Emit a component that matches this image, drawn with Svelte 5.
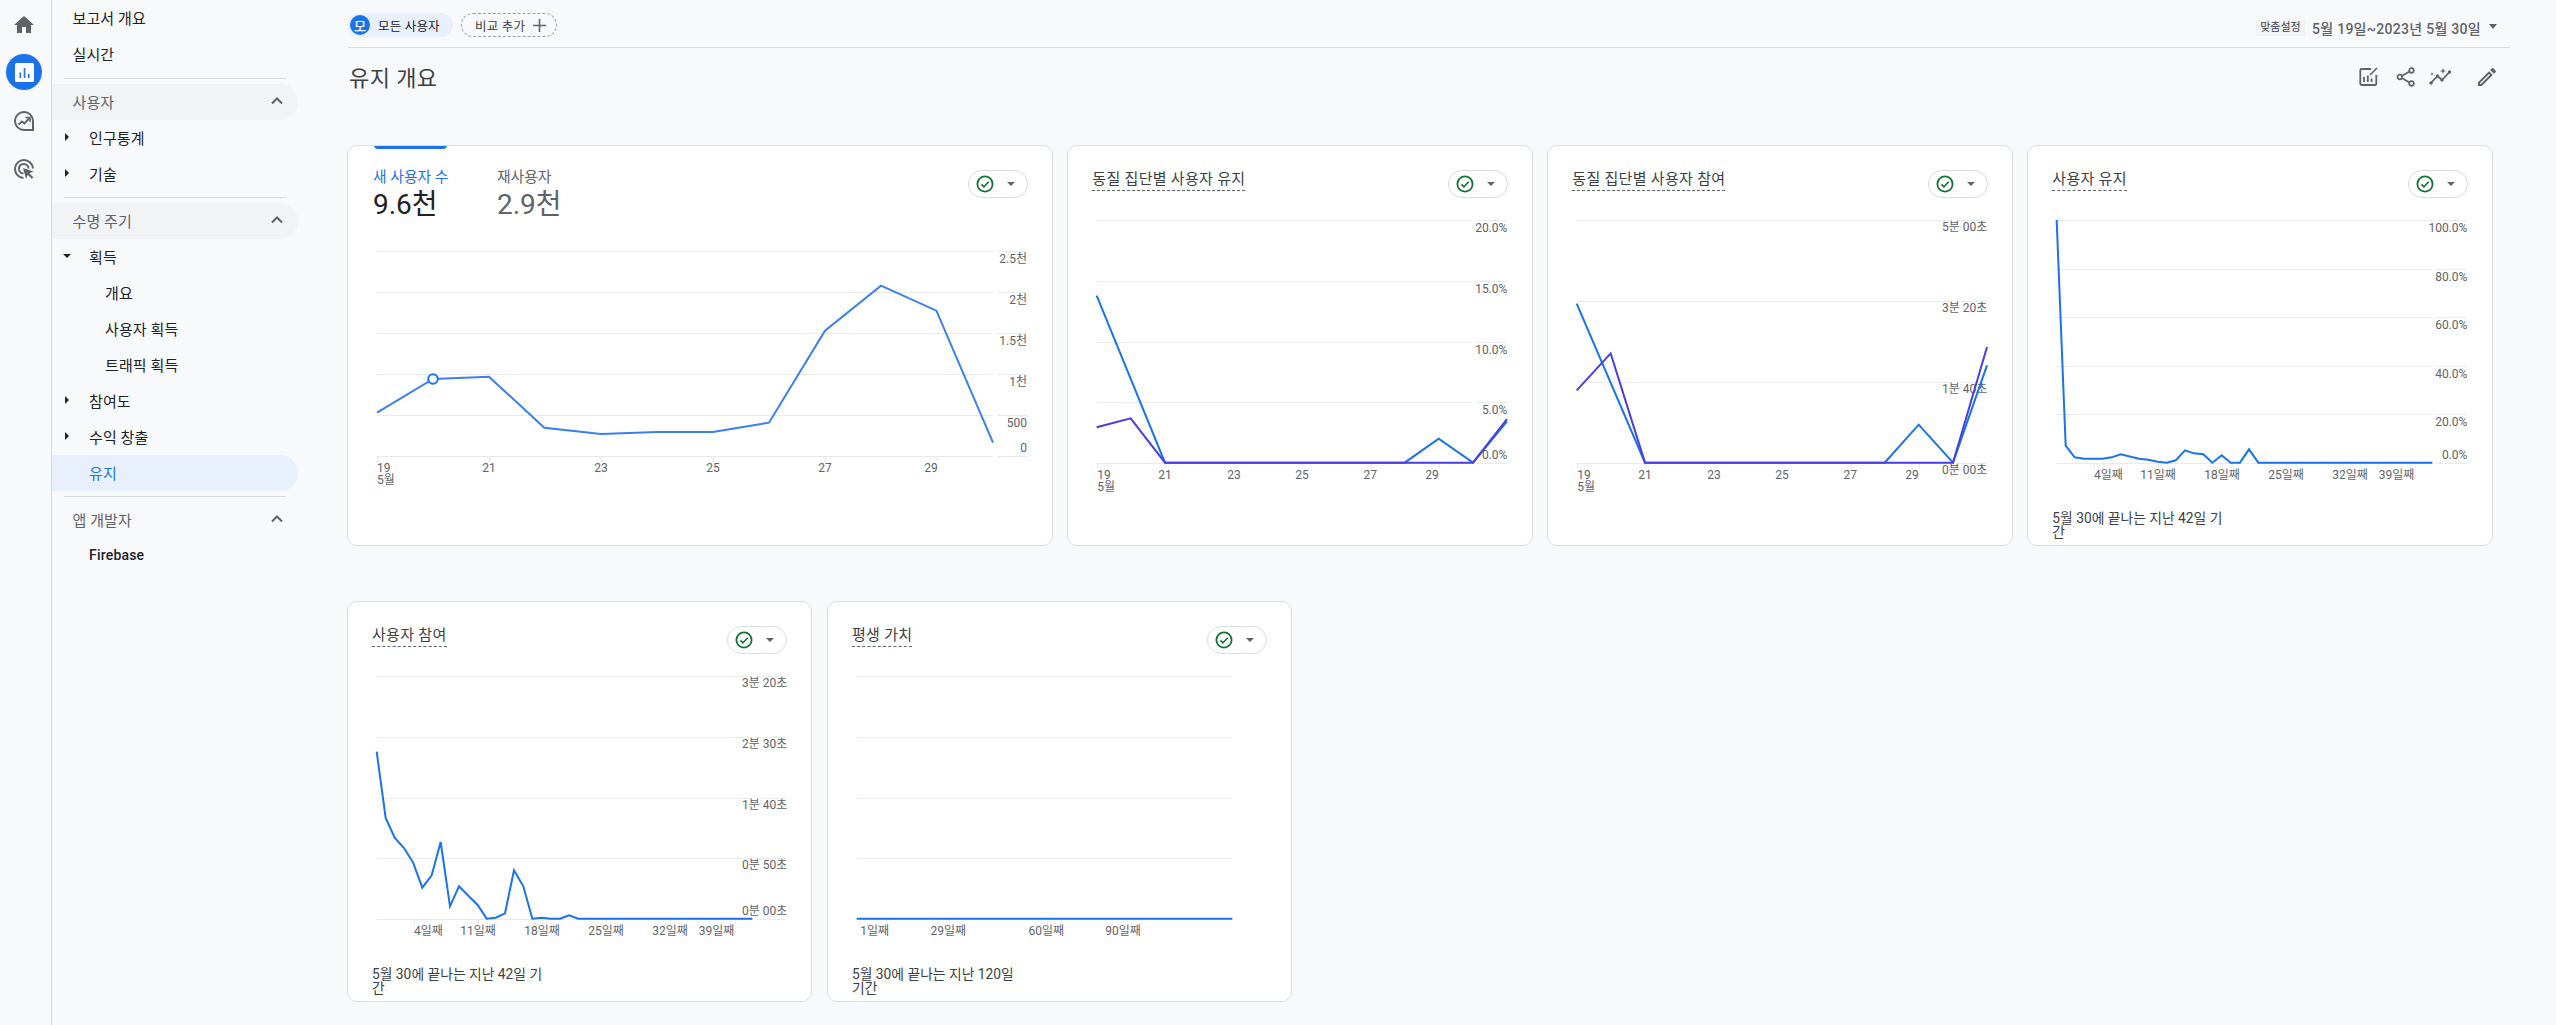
<script>
  const Z1 = 16, Z2 = 4;
  const conv = (pts, top) => pts.map(([x, y]) => `${((x - 22) / 3).toFixed(2)},${((y - top) / 3).toFixed(2)}`).join(' ');
  const BLUE = '#1a73e8', PURPLE = '#4a3de2';
  const xs7 = [
    { x: 30.3, t: '19', a: 'start', sub: '5월' }, { x: 98, t: '21' }, { x: 167, t: '23' },
    { x: 235, t: '25' }, { x: 303.3, t: '27' }, { x: 365, t: '29' }
  ];
  const ticks7 = [30.3, 98, 167, 235, 303.7, 372];
  const days = [
    { x: 67, t: '4일째', a: 'start' }, { x: 131, t: '11일째' }, { x: 195, t: '18일째' },
    { x: 259, t: '25일째' }, { x: 323, t: '32일째' }, { x: 387.3, t: '39일째', a: 'end' }
  ];
  const dayTicks = [67, 131, 195, 259, 323, 388];

  const row1 = [
    {
      title: '동질 집단별 사용자 유지', grid: [75, 136, 197, 257, 318], right: true,
      labels: [['20.0%', 82.3], ['15.0%', 143.3], ['10.0%', 204.3], ['5.0%', 264.3], ['0.0%', 309.3]],
      xl: xs7, ticks: ticks7,
      lines: [
        { c: BLUE, p: conv([[111, 468], [316, 969], [1035, 969], [1137, 897], [1240, 969], [1342, 845]], Z1) },
        { c: PURPLE, p: conv([[111, 863], [213, 836], [316, 969], [1240, 969], [1342, 838]], Z1) }
      ]
    },
    {
      title: '동질 집단별 사용자 참여', grid: [75, 156, 237, 318], right: true,
      labels: [['5분 00초', 82], ['3분 20초', 163], ['1분 40초', 244], ['0분 00초', 325]],
      xl: xs7, ticks: ticks7,
      lines: [
        { c: BLUE, p: conv([[111, 492], [316, 969], [1035, 969], [1137, 855], [1240, 969], [1342, 677]], Z1) },
        { c: PURPLE, p: conv([[111, 752], [213, 641], [316, 969], [1240, 969], [1342, 622]], Z1) }
      ]
    },
    {
      title: '사용자 유지', grid: [75, 124, 172, 221, 269, 318], right: true,
      labels: [['100.0%', 82.3], ['80.0%', 131.3], ['60.0%', 179.3], ['40.0%', 228.3], ['20.0%', 276.3], ['0.0%', 309.3]],
      xl: days, ticks: dayTicks,
      lines: [{ c: BLUE, p: conv([[111, 241], [138, 918], [165, 953], [193, 957], [248, 957], [276, 953], [303, 944], [358, 957], [386, 960], [414, 966], [441, 969], [468, 962], [496, 932], [523, 941], [551, 944], [578, 969], [606, 947], [633, 969], [661, 969], [688, 929], [716, 969], [1238, 969]], Z1) }],
      foot: ['5월 30에 끝나는 지난 42일 기', '간']
    }
  ];
  const row2 = [
    {
      title: '사용자 참여', grid: [75, 136, 197, 257, 318], right: true,
      labels: [['3분 20초', 82], ['2분 30초', 143], ['1분 40초', 204], ['0분 50초', 264], ['0분 00초', 309.3]],
      xl: days, ticks: dayTicks,
      lines: [{ c: BLUE, p: conv([[111, 456], [138, 655], [165, 714], [193, 745], [220, 788], [248, 864], [276, 827], [303, 727], [331, 920], [358, 860], [386, 888], [414, 916], [441, 957], [468, 954], [496, 941], [523, 812], [551, 860], [578, 957], [606, 954], [633, 957], [661, 957], [688, 947], [716, 957], [1238, 957]], Z2) }],
      foot: ['5월 30에 끝나는 지난 42일 기', '간']
    },
    {
      title: '평생 가치', grid: [75, 136, 197, 257, 318], right: false, labels: [],
      xl: [{ x: 33.3, t: '1일째', a: 'start' }, { x: 121.3, t: '29일째' }, { x: 219.3, t: '60일째' }, { x: 313.7, t: '90일째', a: 'end' }],
      ticks: [33.3, 122, 220, 313.7],
      lines: [{ c: BLUE, p: conv([[111, 957], [1238, 957]], Z2) }],
      foot: ['5월 30에 끝나는 지난 120일', '기간']
    }
  ];

  const wideGrid = [106, 147, 188, 229, 270, 311];
  const wideLabels = [['2.5천', 114], ['2천', 155], ['1.5천', 196], ['1천', 237], ['500', 278], ['0', 302.5]];
  const wideX = [
    { x: 30, t: '19', a: 'start', sub: '5월' }, { x: 142, t: '21' }, { x: 254, t: '23' },
    { x: 366, t: '25' }, { x: 478, t: '27' }, { x: 584, t: '29' }
  ];
  const wideTicks = [30, 142, 254, 366, 478, 590];
  const widePts = [[30, 267.7], [86, 234], [142, 231.7], [197.3, 282.7], [254, 289], [310, 287], [366, 287], [422, 277.7], [478, 185.7], [534, 140.7], [589.4, 165.7], [646, 297.7]]
    .map((p) => p.join(',')).join(' ');
</script>

{#snippet pill()}
  <div class="pill">
    <svg width="18" height="18" viewBox="0 0 18 18"><circle cx="9" cy="9" r="7.6" fill="none" stroke="#137333" stroke-width="1.8"/><path d="M5.4 9.4l2.5 2.4 4.8-5" fill="none" stroke="#137333" stroke-width="1.6"/></svg>
    <i class="tri-down"></i>
  </div>
{/snippet}

{#snippet xaxis(c, base)}
  {#each c.ticks as t}
    <line class="gl" x1={t + 0.5} x2={t + 0.5} y1={base} y2={base + 6} />
  {/each}
  {#each c.xl as l}
    <text class="tk" x={l.x} y={base + 16} text-anchor={l.a || 'middle'}>{l.t}</text>
    {#if l.sub}<text class="tk" x={l.x} y={base + 28} text-anchor="start">{l.sub}</text>{/if}
  {/each}
{/snippet}

{#snippet card(c)}
  <section class="card">
    <header class="chead">
      <span class="ctitle">{c.title}</span>
      {@render pill()}
    </header>
    <svg class="chart" width="463.33" height="300" viewBox="1 60 463.33 300">
      {#each c.grid as g}
        <line class="gl" x1="29.7" x2="405.3" y1={g + 0.5} y2={g + 0.5} />
        {#if c.right}<line class="gl" x1="409.3" x2="439.3" y1={g + 0.5} y2={g + 0.5} />{/if}
      {/each}
      {#each c.labels as l}
        <text class="tk" x="440.3" y={l[1] + 4.3} text-anchor="end">{l[0]}</text>
      {/each}
      {@render xaxis(c, 318)}
      {#each c.lines as ln}
        <polyline points={ln.p} fill="none" stroke={ln.c} stroke-width="2" />
      {/each}
    </svg>
    {#if c.foot}
      <p class="foot">{c.foot[0]}<br />{c.foot[1]}</p>
    {/if}
  </section>
{/snippet}

<div class="page">
  <nav class="rail">
    <svg class="ri home" width="24" height="24" viewBox="0 0 24 24"><path d="M10 20v-6h4v6h5v-8h3L12 3 2 12h3v8z" fill="#5f6368"/></svg>
    <div class="ri active">
      <svg width="19" height="19" viewBox="0 0 19 19"><rect width="19" height="19" rx="1.5" fill="#fff"/><path d="M4.5 9.5h1.6V15H4.5zM8.7 5h1.6v10H8.7zM12.9 11h1.6v4h-1.6z" fill="#1a73e8"/></svg>
    </div>
    <svg class="ri explore" width="24" height="24" viewBox="0 0 24 24" fill="none" stroke="#5f6368" stroke-width="2"><path d="M21 21h-9a9 9 0 1 1 9-9z"/><path d="M6.5 15.500l3.500-3 2.500 2 4.500-5" stroke-width="2"/><path d="M13.500 8.500H18V13" stroke-width="1.600"/></svg>
    <svg class="ri" width="24" height="24" viewBox="0 0 24 24" fill="none" stroke="#5f6368" stroke-width="2"><path d="M21 11.500a9 9 0 1 0-9.500 9.500"/><path d="M16.500 11.500a4.800 4.800 0 1 0-5 5"/><path d="M11 11l10.500 3.600-4.200 1.600 4 4-1.600 1.600-4-4-1.600 4.200z" fill="#5f6368" stroke="none"/></svg>
  </nav>

  <aside class="side">
    <div class="it top">보고서 개요</div>
    <div class="it top">실시간</div>
    <hr class="first" />
    <div class="sec bg"><span>사용자</span><svg width="12" height="8" viewBox="0 0 12 8"><path d="M1 6.500l5-5 5 5" fill="none" stroke="#5f6368" stroke-width="2"/></svg></div>
    <div class="it l1"><i class="tri-right"></i><span>인구통계</span></div>
    <div class="it l1"><i class="tri-right"></i><span>기술</span></div>
    <hr />
    <div class="sec bg"><span>수명 주기</span><svg width="12" height="8" viewBox="0 0 12 8"><path d="M1 6.500l5-5 5 5" fill="none" stroke="#5f6368" stroke-width="2"/></svg></div>
    <div class="it l1"><i class="tri-open"></i><span>획득</span></div>
    <div class="it l2">개요</div>
    <div class="it l2">사용자 획득</div>
    <div class="it l2">트래픽 획득</div>
    <div class="it l1"><i class="tri-right"></i><span>참여도</span></div>
    <div class="it l1"><i class="tri-right"></i><span>수익 창출</span></div>
    <div class="it l1 on"><i class="tri-none"></i><span>유지</span></div>
    <hr />
    <div class="sec"><span>앱 개발자</span><svg width="12" height="8" viewBox="0 0 12 8"><path d="M1 6.500l5-5 5 5" fill="none" stroke="#5f6368" stroke-width="2"/></svg></div>
    <div class="it l1"><i class="tri-none"></i><span class="fb">Firebase</span></div>
  </aside>

  <main class="main">
    <div class="topbar">
      <div class="chip seg"><b>모</b><span>모든 사용자</span></div>
      <div class="chip add"><span>비교 추가</span><svg width="13" height="13" viewBox="0 0 13 13"><path d="M6.500 0v13M0 6.500h13" stroke="#5f6368" stroke-width="1.600"/></svg></div>
      <div class="date">
        <span class="custom">맞춤설정</span>
        <span class="range">5월 19일~2023년 5월 30일</span>
        <i class="tri-date"></i>
      </div>
    </div>

    <div class="titlebar">
      <h1>유지 개요</h1>
      <div class="tools">
        <svg class="t1" width="20" height="20" viewBox="0 0 20 20" fill="none" stroke="#5f6368" stroke-width="1.800"><path d="M12 2H2.500A1.200 1.200 0 0 0 1.300 3.200v13.600A1.200 1.200 0 0 0 2.500 18h13.600a1.200 1.200 0 0 0 1.200-1.200V8"/><path d="M11 8l7-7" stroke-width="1.600"/><path d="M5 10v5M8.800 8.500V15M12.600 11.500V15" stroke-width="1.800"/></svg>
        <svg class="t2" width="20" height="20" viewBox="0 0 20 20" fill="none" stroke="#5f6368" stroke-width="1.700"><circle cx="15.500" cy="3.500" r="2.300"/><circle cx="3.800" cy="10" r="2.300"/><circle cx="15.500" cy="16.500" r="2.300"/><path d="M13.500 4.600L5.800 8.900M5.800 11.100l7.700 4.300"/></svg>
        <svg class="t3" width="24" height="20" viewBox="0 0 24 20" fill="#5f6368"><path d="M2 16l6.500-7 4.500 4 7.500-8" fill="none" stroke="#5f6368" stroke-width="1.800"/><circle cx="2" cy="16" r="1.700"/><circle cx="8.500" cy="9" r="1.700"/><circle cx="13" cy="13" r="1.700"/><circle cx="20.500" cy="5" r="1.700"/><path d="M14 1l.8 2.200L17 4l-2.200.8L14 7l-.8-2.200L11 4l2.200-.8zM3 5l.5 1.500L5 7l-1.500.5L3 9l-.5-1.500L1 7l1.500-.5z"/></svg>
        <svg class="t4" width="20" height="20" viewBox="2 2 20 20"><path fill="#5f6368" d="M14.060 9.020l.92.92L5.920 19H5v-.92l9.060-9.060M17.660 3c-.25 0-.51.1-.7.29l-1.830 1.830 3.750 3.750 1.830-1.830c.39-.39.39-1.020 0-1.410l-2.340-2.340c-.2-.2-.45-.29-.71-.29zm-3.600 3.190L3 17.250V21h3.750L17.810 9.940l-3.750-3.750z"/></svg>
      </div>
    </div>

    <div class="row">
      <section class="card wide">
        <i class="tabbar"></i>
        <header class="chead tall">
          <div class="tabs">
            <div class="tab sel"><span>새 사용자 수</span><strong>9.6천</strong></div>
            <div class="tab"><span>재사용자</span><strong>2.9천</strong></div>
          </div>
          {@render pill()}
        </header>
        <svg class="chart" width="703.67" height="264" viewBox="1 96 703.67 264">
          {#each wideGrid as g}
            <line class="gl" x1="30" x2="646" y1={g + 0.5} y2={g + 0.5} />
            <line class="gl" x1="650.500" x2="680" y1={g + 0.5} y2={g + 0.5} />
          {/each}
          {#each wideLabels as l}
            <text class="tk" x="680" y={l[1] + 4.3} text-anchor="end">{l[0]}</text>
          {/each}
          {@render xaxis({ ticks: wideTicks, xl: wideX }, 311)}
          <polyline points={widePts} fill="none" stroke="#3a7ff0" stroke-width="2" />
          <circle cx="86" cy="234" r="4.800" fill="#fff" stroke="#1a73e8" stroke-width="2" />
        </svg>
      </section>
      {#each row1 as c}{@render card(c)}{/each}
    </div>

    <div class="row two">
      {#each row2 as c}{@render card(c)}{/each}
    </div>
  </main>
</div>

<style>
  :global(body) {
    margin: 0;
    background: #f8f9fb;
  }
  .page {
    display: flex;
    height: 1025px;
    overflow: hidden;
    background: #f8f9fb;
    color: #202124;
    font-family: Roboto, "Noto Sans CJK KR", sans-serif;
    font-size: 14px;
  }
  .rail {
    box-sizing: border-box;
    width: 52px;
    flex: none;
    border-right: 1px solid #d5d7db;
    display: flex;
    flex-direction: column;
    align-items: center;
    padding: 13px 3px 0 0;
  }
  .ri {
    display: block;
    margin-bottom: 24px;
  }
  .ri.home {
    margin-bottom: 17px;
  }
  .ri.active {
    width: 36px;
    height: 36px;
    flex: none;
    border-radius: 50%;
    background: #1a73e8;
    display: flex;
    align-items: center;
    justify-content: center;
    margin-bottom: 19px;
  }
  .side {
    width: 246px;
    flex: none;
    font-size: 15px;
    letter-spacing: 0.1px;
  }
  .side hr {
    margin: 5px 12px;
    border: 0;
    border-top: 1px solid #d8dade;
  }
  .side hr.first {
    margin-top: 6px;
  }
  .it {
    box-sizing: border-box;
    height: 36px;
    padding-bottom: 2px;
    display: flex;
    align-items: center;
    border-radius: 0 18px 18px 0;
  }
  .it.top {
    padding-left: 20.500px;
  }
  .it.l1 {
    padding-left: 13px;
  }
  .it.l2 {
    padding-left: 53px;
  }
  .it.on {
    background: #e8f0fe;
    color: #1a73e8;
  }
  .fb {
    font-size: 14px;
    font-weight: 500;
    letter-spacing: 0.2px;
  }
  .sec {
    box-sizing: border-box;
    height: 36px;
    padding: 0 15px 2px 20.500px;
    display: flex;
    align-items: center;
    justify-content: space-between;
    border-radius: 0 18px 18px 0;
    color: #5f6368;
  }
  .sec.bg {
    background: #f1f3f4;
  }
  .tri-right,
  .tri-none,
  .tri-open {
    flex: none;
    display: block;
    width: 0;
    height: 0;
    margin-right: 20px;
  }
  .tri-right {
    border-left: 4px solid #202124;
    border-top: 4px solid transparent;
    border-bottom: 4px solid transparent;
  }
  .tri-none {
    width: 4px;
  }
  .tri-open {
    margin-left: -2px;
    margin-right: 18px;
    border-top: 4px solid #202124;
    border-left: 4px solid transparent;
    border-right: 4px solid transparent;
  }
  .main {
    width: 2162px;
    margin-left: 50px;
    flex: none;
  }
  .topbar {
    box-sizing: border-box;
    height: 48px;
    border-bottom: 1px solid #dadce0;
    display: flex;
    align-items: flex-start;
    padding-top: 13px;
  }
  .chip {
    box-sizing: border-box;
    height: 24px;
    border-radius: 12px;
    display: flex;
    align-items: center;
    font-size: 12.500px;
    letter-spacing: 0.200px;
  }
  .seg {
    width: 105px;
    background: #e8f0fe;
    padding-left: 2px;
    gap: 8px;
  }
  .seg b {
    flex: none;
    width: 20px;
    height: 20px;
    border-radius: 50%;
    background: #1a73e8;
    color: #fff;
    font-weight: 500;
    font-size: 13px;
    display: flex;
    align-items: center;
    justify-content: center;
  }
  .add {
    width: 96px;
    margin-left: 8px;
    border: 1px dashed #9aa0a6;
    padding-left: 13px;
    gap: 8px;
    color: #3c4043;
  }
  .date {
    margin-left: auto;
    display: flex;
    align-items: center;
    margin-top: 7px;
    margin-right: 13px;
    height: 16px;
  }
  .custom {
    width: 49px;
    height: 16px;
    line-height: 16px;
    text-align: center;
    background: #f1f3f4;
    color: #3c4043;
    font-size: 11px;
  }
  .range {
    margin-left: 7px;
    font-size: 14px;
    font-weight: 500;
    letter-spacing: 0.280px;
    color: #5f6368;
  }
  .tri-date {
    margin-left: 8px;
    margin-bottom: 3px;
    width: 0;
    height: 0;
    border-top: 5px solid #5f6368;
    border-left: 4.500px solid transparent;
    border-right: 4.500px solid transparent;
  }
  .titlebar {
    height: 97px;
    position: relative;
    display: flex;
    justify-content: space-between;
    align-items: flex-start;
  }
  h1 {
    margin: 16px 0 0 1px;
    font-size: 22px;
    line-height: 30px;
    font-weight: 400;
    color: #3c4043;
    letter-spacing: 0.400px;
  }
  .tools {
    display: flex;
    align-items: center;
    margin-top: 19px;
    margin-right: 13px;
  }
  .t2 {
    margin-left: 17px;
  }
  .t3 {
    margin-left: 13px;
  }
  .t4 {
    margin-left: 24px;
  }
  .row {
    display: flex;
    gap: 14.670px;
    margin-left: -1px;
    margin-bottom: 55px;
  }
  .card {
    box-sizing: border-box;
    width: 465.330px;
    height: 401px;
    flex: none;
    position: relative;
    background: #fff;
    border: 1px solid #dadce0;
    border-radius: 10px;
    overflow: hidden;
  }
  .card.wide {
    width: 705.670px;
  }
  .tabbar {
    position: absolute;
    left: 26px;
    top: -1px;
    width: 73px;
    height: 4px;
    background: #1a73e8;
    border-radius: 0 0 4px 4px;
  }
  .chead {
    box-sizing: border-box;
    height: 59px;
    display: flex;
    justify-content: space-between;
    align-items: flex-start;
    padding: 24px 24px 0 24px;
  }
  .chead.tall {
    height: 95px;
    padding-left: 25px;
  }
  .ctitle {
    margin-top: -1px;
    line-height: 21px;
    font-size: 15px;
    letter-spacing: 0.300px;
    color: #3c4043;
    border-bottom: 1px dashed #5f6368;
  }
  .pill {
    box-sizing: border-box;
    width: 60px;
    height: 28px;
    flex: none;
    border: 1px solid #dadce0;
    border-radius: 14px;
    background: #fff;
    display: flex;
    align-items: center;
    padding-left: 7px;
  }
  .tri-down {
    margin-left: 13px;
    width: 0;
    height: 0;
    border-top: 4px solid #5f6368;
    border-left: 4px solid transparent;
    border-right: 4px solid transparent;
  }
  .tabs {
    display: flex;
  }
  .tab {
    width: 124px;
    color: #5f6368;
    margin-top: -3px;
  }
  .tab span {
    display: block;
    font-size: 14.800px;
    line-height: 20px;
    letter-spacing: 0;
  }
  .tab strong {
    display: block;
    font-weight: 400;
    font-size: 28px;
    line-height: 32px;
    margin-top: 2px;
  }
  .tab.sel span {
    color: #1a73e8;
  }
  .tab.sel strong {
    color: #202124;
  }
  .chart {
    display: block;
  }
  .gl {
    stroke: #e8eaed;
    stroke-width: 1;
  }
  .tk {
    font-family: Roboto, "Noto Sans CJK KR", sans-serif;
    font-size: 12px;
    fill: #5f6368;
  }
  .foot {
    margin: 5.500px 0 0 24px;
    font-size: 13.800px;
    line-height: 14.700px;
    color: #3c4043;
    white-space: nowrap;
  }
</style>
